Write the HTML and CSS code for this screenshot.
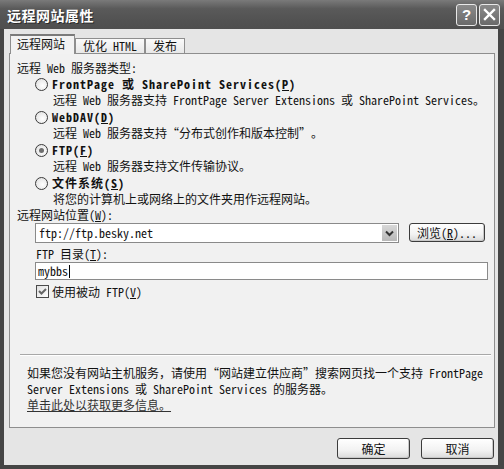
FILE: index.html
```html
<!DOCTYPE html>
<html>
<head>
<meta charset="utf-8">
<link rel="stylesheet" href="styles.css">
</head>
<body>
<div class="window">
  <div class="titlebar">
    <span class="title">远程网站属性</span>
    <div class="tbtns">
      <span class="tbtn help">?</span>
      <span class="tbtn close"><svg width="13" height="13" viewBox="0 0 13 13"><path d="M2 2 L11 11 M11 2 L2 11" stroke="#fff" stroke-width="2.4" stroke-linecap="square"/></svg></span>
    </div>
  </div>
  <div class="client">
    <div class="tabs">
      <div class="tab active">远程网站</div>
      <div class="tab">优化 HTML</div>
      <div class="tab">发布</div>
    </div>
    <div class="panel">
      <div class="line">远程 Web 服务器类型:</div>
      <div class="opts">
        <div class="opt">
          <div class="ohead"><span class="radio"></span><b>FrontPage 或 SharePoint Services(<u>P</u>)</b></div>
          <div class="odesc">远程 Web 服务器支持 FrontPage Server Extensions 或 SharePoint Services。</div>
        </div>
        <div class="opt">
          <div class="ohead"><span class="radio"></span><b>WebDAV(<u>D</u>)</b></div>
          <div class="odesc">远程 Web 服务器支持<span class="q">“</span>分布式创作和版本控制<span class="q">”</span>。</div>
        </div>
        <div class="opt">
          <div class="ohead"><span class="radio checked"></span><b>FTP(<u>F</u>)</b></div>
          <div class="odesc">远程 Web 服务器支持文件传输协议。</div>
        </div>
        <div class="opt">
          <div class="ohead"><span class="radio"></span><b>文件系统(<u>S</u>)</b></div>
          <div class="odesc">将您的计算机上或网络上的文件夹用作远程网站。</div>
        </div>
      </div>
      <div class="line">远程网站位置(<u>W</u>):</div>
      <div class="locrow">
        <div class="combo">
          <span class="val">ftp://ftp.besky.net</span>
          <span class="arrow"><svg width="9" height="7" viewBox="0 0 9 7"><path d="M1 1.5 L4.5 5 L8 1.5" fill="none" stroke="#333" stroke-width="2"/></svg></span>
        </div>
        <button class="btn browse">浏览(<u>R</u>)...</button>
      </div>
      <div class="line ftplbl">FTP 目录(<u>T</u>):</div>
      <div class="input">mybbs<span class="caret"></span></div>
      <div class="chk">
        <span class="box"><svg width="11" height="11" viewBox="0 0 11 11"><path d="M2 5 L4.5 7.5 L9 3" fill="none" stroke="#666" stroke-width="2"/></svg></span>
        <span>使用被动 FTP(<u>V</u>)</span>
      </div>
      <div class="sep"></div>
      <div class="info">
        <div class="iline">如果您没有网站主机服务，请使用<span class="q">“</span>网站建立供应商<span class="q">”</span>搜索网页找一个支持 FrontPage</div>
        <div class="iline">Server Extensions 或 SharePoint Services 的服务器。</div>
        <div class="iline"><a class="link" href="#">单击此处以获取更多信息。</a></div>
      </div>
    </div>
    <div class="footer">
      <button class="btn ok">确定</button>
      <button class="btn cancel">取消</button>
    </div>
  </div>
</div>
</body>
</html>
```

FILE: styles.css
```css
html, body {
  margin: 0;
  padding: 0;
  background: #3e3e3e;
}
.window {
  width: 504px;
  height: 469px;
  display: flex;
  flex-direction: column;
  background: #454545;
  font-family: "Noto Sans Mono CJK SC", "Noto Sans CJK SC", monospace;
  font-size: 12px;
  color: #111;
  overflow: hidden;
}
.titlebar {
  height: 29px;
  flex: none;
  display: flex;
  align-items: center;
  justify-content: space-between;
  padding: 0 4px 0 7px;
  background: linear-gradient(#7a7a7a, #5a5a5a 30%, #525252 70%, #4e4e4e);
}
.title {
  color: #fff;
  font-weight: bold;
  font-size: 14px;
  letter-spacing: 0.5px;
  text-shadow: 1px 1px 0 #2a2a2a;
}
.tbtns {
  display: flex;
  gap: 2px;
}
.tbtn {
  width: 19px;
  height: 20px;
  border: 1px solid #e8e8e8;
  border-radius: 3px;
  background: linear-gradient(#8a8a8a, #6a6a6a);
  display: flex;
  align-items: center;
  justify-content: center;
  color: #fff;
  font-family: "Liberation Sans", sans-serif;
  font-weight: bold;
  font-size: 15px;
}
.client {
  flex: 1;
  margin: 0 6px 4px 4px;
  background: #e5e5e5;
  display: flex;
  flex-direction: column;
  padding: 0 3px 0 5px;
}
.tabs {
  height: 20px;
  margin-top: 4px;
  display: flex;
  align-items: flex-end;
  padding-left: 1px;
  position: relative;
  z-index: 1;
}
.tab {
  height: 14px;
  line-height: 14px;
  padding: 0 7px;
  border: 1px solid #8e8e8e;
  border-bottom: none;
  background: linear-gradient(#fafafa, #e8e8e8);
  white-space: nowrap;
}
.tab.active {
  line-height: 16px;
  padding: 0 9px 0 6px;
  background: #f2f2f2;
  border-top: 2px solid #7a7a7a;
  margin-bottom: -1px;
  height: 18px;
}
.panel {
  flex: 1;
  background: #f1f1f1;
  border: 1px solid #8e8e8e;
  display: flex;
  flex-direction: column;
  padding: 6px 0 14px 7px;
}
.line {
  height: 16px;
  line-height: 16px;
  white-space: nowrap;
}
.opts {
  margin-left: 18px;
}
.opt + .opt {
  margin-top: 1px;
}
.ohead {
  height: 16px;
  display: flex;
  align-items: center;
  gap: 4px;
  white-space: nowrap;
}
.ohead b {
  letter-spacing: 1px;
  line-height: 16px;
}
.odesc {
  height: 16px;
  line-height: 16px;
  margin-left: 18px;
  white-space: nowrap;
}
.radio {
  width: 11px;
  height: 11px;
  border: 1px solid #3a3a3a;
  border-radius: 50%;
  background: radial-gradient(circle at 60% 60%, #fff, #dcdcdc);
  position: relative;
  flex: none;
}
.radio.checked::after {
  content: "";
  position: absolute;
  left: 3px;
  top: 3px;
  width: 5px;
  height: 5px;
  border-radius: 50%;
  background: #6e6e6e;
}
.q {
  display: inline-block;
  width: 12px;
  text-align: center;
}
.locrow {
  display: flex;
  margin-left: 18px;
  height: 20px;
}
.combo {
  width: 362px;
  height: 18px;
  border: 1px solid #8a8a8a;
  background: #fff;
  display: flex;
  align-items: center;
  justify-content: space-between;
}
.val {
  padding-left: 3px;
  line-height: 16px;
}
.arrow {
  width: 15px;
  height: 16px;
  margin-right: 1px;
  background: linear-gradient(#d8d8d8, #b8b8b8);
  display: flex;
  align-items: center;
  justify-content: center;
}
.btn {
  font-family: inherit;
  font-size: 12px;
  color: #111;
  padding: 0;
  border: 1px solid #3c3c3c;
  border-radius: 3px;
  background: linear-gradient(#ffffff, #f2f2f2 60%, #dadada);
  box-shadow: inset -1px -1px 0 #c8c8c8;
  white-space: nowrap;
}
.browse {
  margin-left: 10px;
  width: 76px;
  height: 19px;
  line-height: 16px;
}
.ftplbl {
  margin-top: 3px;
  margin-left: 19px;
}
.input {
  margin-left: 18px;
  width: 449px;
  height: 16px;
  border: 1px solid #8a8a8a;
  background: #fff;
  line-height: 16px;
  padding-left: 2px;
  display: flex;
  align-items: center;
}
.caret {
  width: 1px;
  height: 13px;
  background: #000;
  margin-left: 1px;
}
.chk {
  margin-top: 3px;
  margin-left: 19px;
  height: 16px;
  display: flex;
  align-items: center;
  gap: 3px;
  white-space: nowrap;
}
.box {
  width: 11px;
  height: 11px;
  border: 1px solid #4a4a4a;
  background: linear-gradient(135deg, #e0e0e0, #fff);
  display: flex;
  align-items: center;
  justify-content: center;
}
.sep {
  margin-top: auto;
  margin-left: 3px;
  margin-right: 3px;
  height: 0;
  border-top: 1px solid #a8a8a8;
  border-bottom: 1px solid #ffffff;
}
.info {
  margin: 9px 0 0 10px;
  display: flex;
  flex-direction: column;
}
.iline {
  height: 16px;
  line-height: 16px;
  white-space: nowrap;
}
.link {
  color: #333;
  text-decoration: underline;
}
.footer {
  height: 37px;
  flex: none;
  display: flex;
  justify-content: flex-end;
  align-items: flex-start;
  padding-top: 10px;
  box-sizing: border-box;
  gap: 11px;
  padding-right: 1px;
}
.ok, .cancel {
  width: 73px;
  height: 21px;
}
```
